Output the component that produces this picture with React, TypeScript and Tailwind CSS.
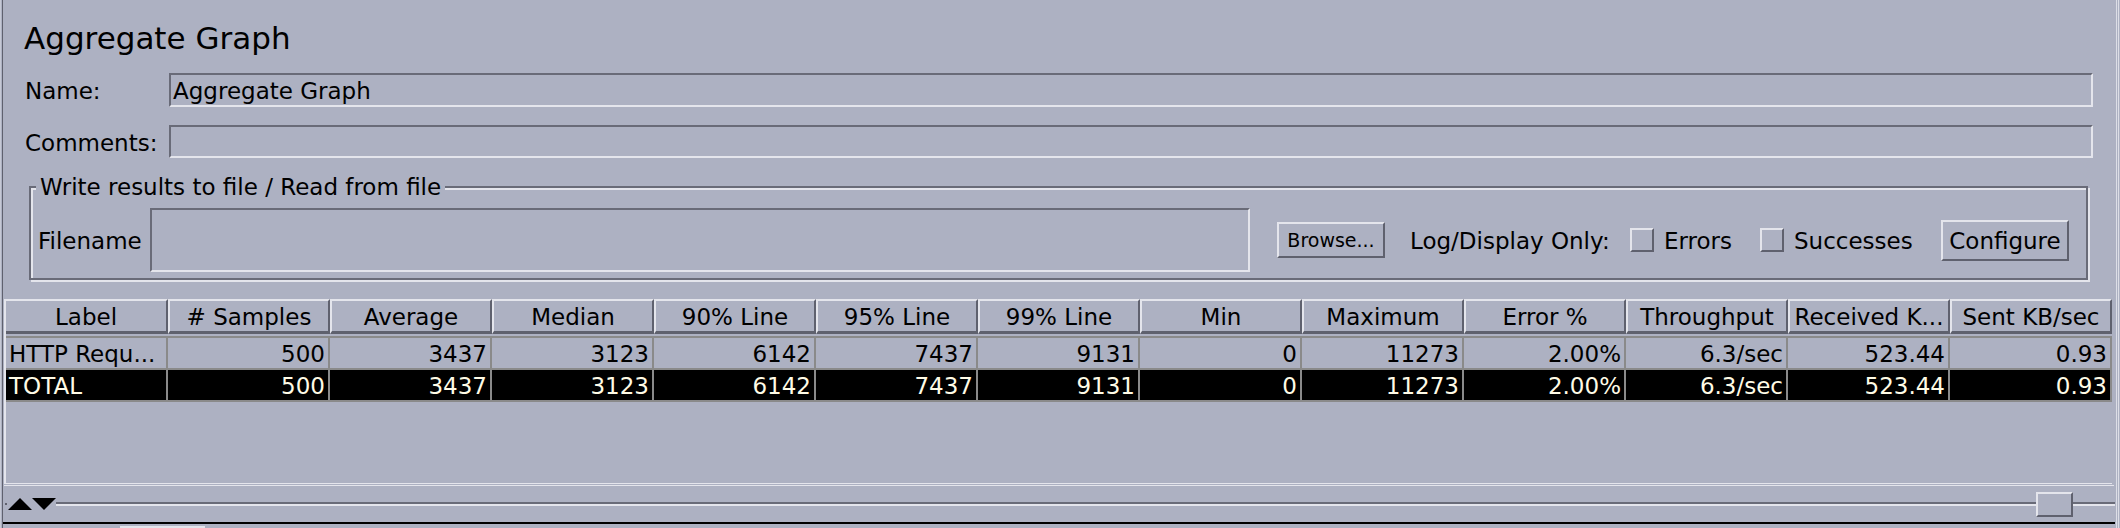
import React from "react";

const headers = [
  "Label",
  "# Samples",
  "Average",
  "Median",
  "90% Line",
  "95% Line",
  "99% Line",
  "Min",
  "Maximum",
  "Error %",
  "Throughput",
  "Received K...",
  "Sent KB/sec",
];

const values = ["500", "3437", "3123", "6142", "7437", "9131", "0", "11273", "2.00%", "6.3/sec", "523.44", "0.93"];

function Row({ label, total }: { label: string; total?: boolean }) {
  return (
    <div
      className={
        total
          ? "grid grid-cols-[repeat(13,minmax(0,1fr))] h-[32px] border-b-2 border-[#8a8a8a] bg-black text-[#fffbe6]"
          : "grid grid-cols-[repeat(13,minmax(0,1fr))] h-[32px] border-b-2 border-[#8a8a8a]"
      }
    >
      <div className="flex items-center justify-start border-r-2 border-[#8a8a8a] pl-[3px] pr-[3px] pt-[2px] whitespace-nowrap overflow-hidden text-[23px]">
        {label}
      </div>
      {values.map((v, i) => (
        <div
          key={i}
          className="flex items-center justify-end border-r-2 border-[#8a8a8a] pl-[3px] pr-[3px] pt-[2px] whitespace-nowrap overflow-hidden text-[23px]"
        >
          {v}
        </div>
      ))}
    </div>
  );
}

function Checkbox() {
  return (
    <div className="w-[24px] h-[24px] shrink-0 border-2 border-t-[#e4e5ec] border-l-[#e4e5ec] border-b-[#5f616e] border-r-[#5f616e]" />
  );
}

export default function App() {
  return (
    <div className="w-[2120px] h-[528px] bg-[#adb1c2] flex overflow-hidden font-['DejaVu_Sans',sans-serif] text-black">
      {/* left frame */}
      <div className="w-px shrink-0 bg-[#c6c9d5]" />
      <div className="w-px shrink-0" />
      <div className="w-px shrink-0 bg-[#5f616e]" />

      <div className="flex-1 min-w-0 flex flex-col">
        {/* title */}
        <div className="h-[73px] shrink-0 pt-[20px] pl-[21px] text-[31px] leading-[36px] whitespace-nowrap">
          Aggregate Graph
        </div>

        {/* Name */}
        <div className="h-[34px] shrink-0 flex items-stretch text-[23px]">
          <div className="w-[166px] shrink-0 pl-[22px] pt-[3px] flex items-center">Name:</div>
          <div className="flex-1 mr-[22px] border-2 border-t-[#696b78] border-l-[#696b78] border-b-[#e4e5ec] border-r-[#e4e5ec] flex items-center pl-[2px] pt-[3px] whitespace-nowrap">
            Aggregate Graph
          </div>
        </div>

        {/* Comments */}
        <div className="mt-[18px] h-[33px] shrink-0 flex items-stretch text-[23px]">
          <div className="w-[166px] shrink-0 pl-[22px] pt-[3px] flex items-center">Comments:</div>
          <div className="flex-1 mr-[22px] border-2 border-t-[#696b78] border-l-[#696b78] border-b-[#e4e5ec] border-r-[#e4e5ec]" />
        </div>

        {/* group box */}
        <div className="relative mt-[28px] ml-[26px] mr-[27px] h-[94px] shrink-0 border-2 border-[#696b78] shadow-[inset_2px_2px_0_#e4e5ec,2px_2px_0_#e4e5ec] pt-[20px] pb-[6px] pl-[7px]">
          <div className="absolute left-[5px] top-[-14px] px-[4px] bg-[#adb1c2] text-[23px] leading-[27px] whitespace-nowrap">
            Write results to file / Read from file
          </div>
          <div className="h-[64px] flex items-center text-[23px] whitespace-nowrap">
            <div className="w-[112px] shrink-0 pt-[2px]">Filename</div>
            <div className="w-[1100px] h-[64px] shrink-0 border-2 border-t-[#696b78] border-l-[#696b78] border-b-[#e4e5ec] border-r-[#e4e5ec]" />
            <div className="ml-[27px] w-[108px] h-[36px] shrink-0 border-2 border-t-[#e4e5ec] border-l-[#e4e5ec] border-b-[#5f616e] border-r-[#5f616e] flex items-center justify-center text-[19px]">
              Browse...
            </div>
            <div className="ml-[25px] w-[199px] shrink-0 pt-[2px]">Log/Display Only:</div>
            <div className="ml-[21px]">
              <Checkbox />
            </div>
            <div className="ml-[10px] w-[69px] shrink-0 pt-[2px]">Errors</div>
            <div className="ml-[27px]">
              <Checkbox />
            </div>
            <div className="ml-[10px] w-[113px] shrink-0 pt-[2px]">Successes</div>
            <div className="ml-[34px] w-[128px] h-[41px] shrink-0 border-2 border-t-[#e4e5ec] border-l-[#e4e5ec] border-b-[#5f616e] border-r-[#5f616e] flex items-center justify-center pt-[2px]">
              Configure
            </div>
          </div>
        </div>

        {/* table scroll pane */}
        <div className="mt-[19px] ml-[1px] w-[2108px] h-[185px] shrink-0 border-l-2 border-b border-[#e4e5ec]">
          <div className="grid grid-cols-[repeat(13,minmax(0,1fr))] h-[35px]">
            {headers.map((h, i) => (
              <div
                key={i}
                className="flex items-center justify-center whitespace-nowrap overflow-hidden text-[23px] pt-[2px] border-t-2 border-l-2 border-b-[3px] border-r-2 border-t-[#e4e5ec] border-l-[#e4e5ec] border-b-[#5f616e] border-r-[#5f616e] first:border-l-0"
              >
                {h}
              </div>
            ))}
          </div>
          <div className="mt-[2px] border-t-2 border-[#8a8a8a]">
            <Row label="HTTP Requ..." />
            <Row label="TOTAL" total />
          </div>
        </div>
        <div className="h-[1px] shrink-0" />
        <div className="h-[1px] shrink-0 ml-[1px] mr-[1px] bg-[#e4e5ec]" />

        {/* split pane divider */}
        <div className="h-[36px] shrink-0 flex items-center">
          <div className="ml-[2px] w-[2px] h-[2px] bg-[#5f616e] shrink-0" />
          <svg width="48" height="12" viewBox="0 0 48 12" className="ml-[1px] shrink-0">
            <polygon points="0,12 12,0 24,12" fill="#000" />
            <polygon points="24,0 48,0 36,12" fill="#000" />
          </svg>
          <div className="flex-1 h-[4px] border-t-2 border-b-2 border-t-[#696b78] border-b-[#e4e5ec]" />
          <div className="w-[37px] h-[25px] shrink-0 border-2 border-t-[#e4e5ec] border-l-[#e4e5ec] border-b-[#5f616e] border-r-[#5f616e]" />
          <div className="w-[42px] h-[4px] shrink-0 border-t-2 border-b-2 border-t-[#696b78] border-b-[#e4e5ec]" />
        </div>

        <div className="h-[2px] shrink-0 bg-black" />
        <div className="h-[4px] shrink-0 pt-[2px]">
          <div className="ml-[117px] w-[85px] h-[2px] bg-[#e4e5ec]" />
        </div>
      </div>

      {/* right frame */}
      <div className="w-px shrink-0" />
      <div className="w-px shrink-0 bg-[#dcdee6]" />
      <div className="w-px shrink-0" />
      <div className="w-px shrink-0 bg-[#dcdee6]" />
      <div className="w-px shrink-0" />
    </div>
  );
}
